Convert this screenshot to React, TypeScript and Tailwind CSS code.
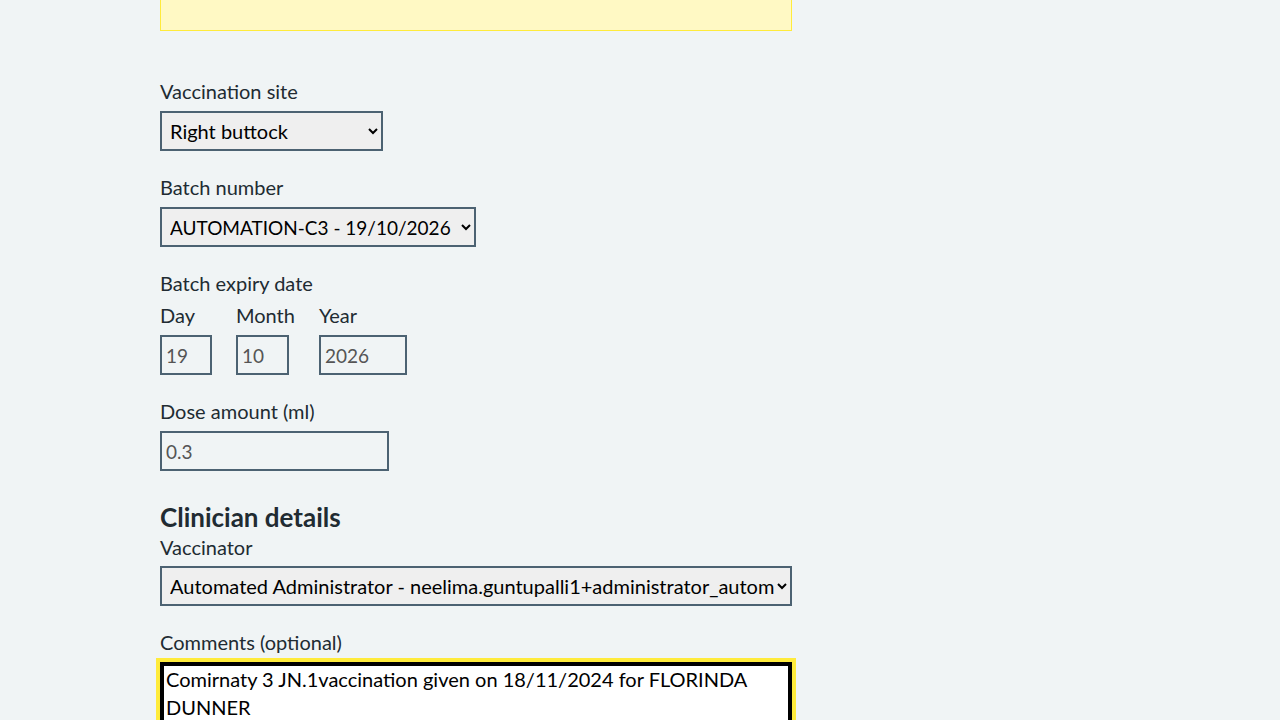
import { useState } from 'react'

const fieldBorder = 'border-2 border-[#4c6272]'

function Label({ children, htmlFor }: { children: React.ReactNode; htmlFor?: string }) {
  return (
    <label htmlFor={htmlFor} className="mb-2 block text-[20px] leading-[24px] text-[#212b32]">
      {children}
    </label>
  )
}

function DateInput({ label, value, width }: { label: string; value: string; width: string }) {
  return (
    <div className="mr-6 flex flex-col">
      <Label>{label}</Label>
      <input
        readOnly
        value={value}
        className={`${fieldBorder} ${width} h-10 bg-transparent px-1 text-[19px] text-[#555] outline-none`}
      />
    </div>
  )
}

export default function App() {
  const [comment, setComment] = useState('Comirnaty 3 JN.1vaccination given on 18/11/2024 for FLORINDA DUNNER')

  return (
    <div className="min-h-screen bg-[#f0f4f5] font-['Lato','Liberation_Sans',sans-serif] text-[#212b32]">
      <div className="ml-[160px] w-[632px] pb-10">
        <div className="h-[31px] border border-t-0 border-[#ffeb3b] bg-[#fff9c4]" />

        <div className="mt-[48px] mb-6">
          <Label htmlFor="site">Vaccination site</Label>
          <select
            id="site"
            defaultValue="Right buttock"
            className={`${fieldBorder} h-10 w-[223px] bg-[#efefef] pl-1 text-[20px] text-black`}
          >
            <option>Right buttock</option>
            <option>Left buttock</option>
          </select>
        </div>

        <div className="mb-6">
          <Label htmlFor="batch">Batch number</Label>
          <select
            id="batch"
            defaultValue="a"
            className={`${fieldBorder} h-10 w-[316px] bg-[#efefef] pl-1 text-[19px] text-black`}
          >
            <option value="a">AUTOMATION-C3 - 19/10/2026</option>
          </select>
        </div>

        <fieldset className="mb-6">
          <legend className="mb-2 text-[20px] leading-[24px]">Batch expiry date</legend>
          <div className="flex">
            <DateInput label="Day" value="19" width="w-[52px]" />
            <DateInput label="Month" value="10" width="w-[53px]" />
            <DateInput label="Year" value="2026" width="w-[88px]" />
          </div>
        </fieldset>

        <div className="mb-6">
          <Label htmlFor="dose">Dose amount (ml)</Label>
          <input
            id="dose"
            readOnly
            value="0.3"
            className={`${fieldBorder} h-10 w-[229px] bg-transparent px-1 text-[19px] text-[#555] outline-none`}
          />
        </div>

        <h2 className="pt-[6px] text-[26px] font-bold leading-[32px]">Clinician details</h2>
        <div className="mb-6">
          <label htmlFor="vaccinator" className="mb-[7px] block pt-[2px] text-[20px] leading-[24px]">
            Vaccinator
          </label>
          <select
            id="vaccinator"
            defaultValue="v"
            className={`${fieldBorder} h-10 w-full bg-[#efefef] pl-1 text-[20px] text-black`}
          >
            <option value="v">Automated Administrator - neelima.guntupalli1+administrator_automation@nhs.net</option>
          </select>
        </div>

        <div>
          <Label htmlFor="comments">Comments (optional)</Label>
          <textarea
            id="comments"
            rows={5}
            value={comment}
            onChange={(e) => setComment(e.target.value)}
            className="block w-full resize-y border-2 border-black bg-white px-1 pt-[1px] text-[20px] leading-[28px] text-black shadow-[inset_0_0_0_2px_#000] outline-4 outline-[#ffeb3b]"
          />
        </div>
      </div>
    </div>
  )
}
